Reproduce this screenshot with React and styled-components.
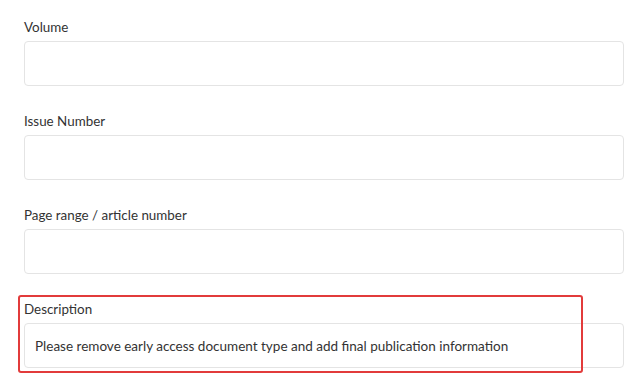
import styled, { createGlobalStyle } from 'styled-components';

const GlobalStyle = createGlobalStyle`
  body {
    margin: 0;
    background: #ffffff;
    font-family: Lato, "Open Sans", sans-serif;
  }
`;

const Form = styled.div`
  position: relative;
  display: flex;
  flex-direction: column;
  gap: 25px;
  padding: 17px 11px 24px 24px;
`;

const Field = styled.div`
  display: flex;
  flex-direction: column;
  gap: 4px;
`;

const Label = styled.label`
  font-size: 13.4px;
  line-height: 20px;
  color: #333333;
`;

const Input = styled.div`
  box-sizing: border-box;
  height: 45px;
  border: 1px solid #e4e4e4;
  border-radius: 4px;
  padding: 0 10px;
  display: flex;
  align-items: center;
  font-size: 13.5px;
  color: #333333;
`;

const Highlight = styled.div`
  position: absolute;
  left: 18px;
  top: 295px;
  width: 565px;
  height: 78px;
  box-sizing: border-box;
  border: 2.5px solid #e23b3b;
  border-radius: 3px;
  pointer-events: none;
`;

const fields = [
  { label: 'Volume', value: '' },
  { label: 'Issue Number', value: '' },
  { label: 'Page range / article number', value: '' },
  {
    label: 'Description',
    value: 'Please remove early access document type and add final publication information',
  },
];

const App = () => {
  return (
    <>
      <GlobalStyle />
      <Form>
        {fields.map((f) => (
          <Field key={f.label}>
            <Label>{f.label}</Label>
            <Input>{f.value}</Input>
          </Field>
        ))}
        <Highlight />
      </Form>
    </>
  );
};

export default App;
